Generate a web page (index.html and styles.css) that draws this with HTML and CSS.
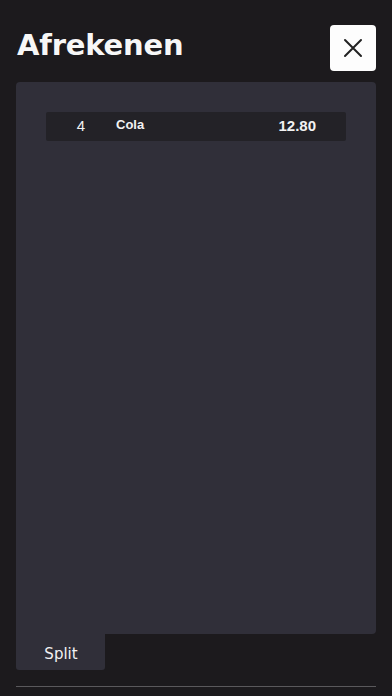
FILE: index.html
```html
<!DOCTYPE html>
<html>
<head>
<meta charset="utf-8">
<link rel="stylesheet" href="styles.css">
</head>
<body>
<div class="screen">
  <header class="header">
    <h1 class="title">Afrekenen</h1>
    <button class="close" aria-label="Sluiten">
      <svg width="20" height="20" viewBox="0 0 20 20"><path d="M2 2 L18 18 M18 2 L2 18" stroke="#222" stroke-width="2" stroke-linecap="round"/></svg>
    </button>
  </header>
  <main class="panel">
    <div class="row">
      <span class="qty">4</span>
      <span class="name">Cola</span>
      <span class="price">12.80</span>
    </div>
  </main>
  <div class="tabs">
    <div class="tab">Split</div>
  </div>
  <div class="rule"></div>
</div>
</body>
</html>
```
FILE: styles.css
```css
html, body {
  margin: 0;
  padding: 0;
  background: #1c1a1d;
  width: 392px;
  height: 696px;
  overflow: hidden;
}
.screen {
  display: flex;
  flex-direction: column;
  height: 696px;
  padding: 0 16px;
  box-sizing: border-box;
}
.header {
  display: flex;
  justify-content: space-between;
  align-items: flex-start;
  height: 82px;
  padding-top: 25px;
  box-sizing: border-box;
}
.title {
  margin: 0;
  margin-left: 1px;
  font-family: "Comic Sans MS", "DejaVu Sans", sans-serif;
  font-weight: bold;
  font-size: 29px;
  line-height: 40px;
  color: #f7f7f7;
  letter-spacing: -0.2px;
}
.close {
  width: 46px;
  height: 46px;
  border: none;
  border-radius: 4px;
  background: #fdfdfd;
  display: flex;
  align-items: center;
  justify-content: center;
  padding: 0;
}
.panel {
  height: 552px;
  background: #302f39;
  border-radius: 4px 4px 4px 0;
  padding: 30px 30px 0;
  box-sizing: border-box;
}
.row {
  height: 29px;
  background: #232227;
  border-radius: 2px;
  display: flex;
  align-items: center;
  font-family: "Liberation Sans", Arial, sans-serif;
  color: #f2f2f2;
}
.qty {
  width: 70px;
  text-align: center;
  font-size: 15px;
  margin-top: -3px;
}
.name {
  flex: 1;
  font-weight: bold;
  font-size: 13px;
  margin-top: -4px;
}
.price {
  font-weight: bold;
  font-size: 15px;
  margin-right: 30px;
  margin-top: -2px;
}
.tabs {
  display: flex;
}
.tab {
  width: 89px;
  height: 36px;
  background: #302f39;
  border-radius: 0 0 3px 3px;
  color: #f2f2f2;
  font-family: "Comic Sans MS", "DejaVu Sans", sans-serif;
  font-size: 15px;
  display: flex;
  align-items: center;
  justify-content: center;
  padding-left: 1px;
  padding-top: 4px;
  box-sizing: border-box;
}
.rule {
  margin-top: 16px;
  height: 1px;
  background: #5a595c;
}
```
